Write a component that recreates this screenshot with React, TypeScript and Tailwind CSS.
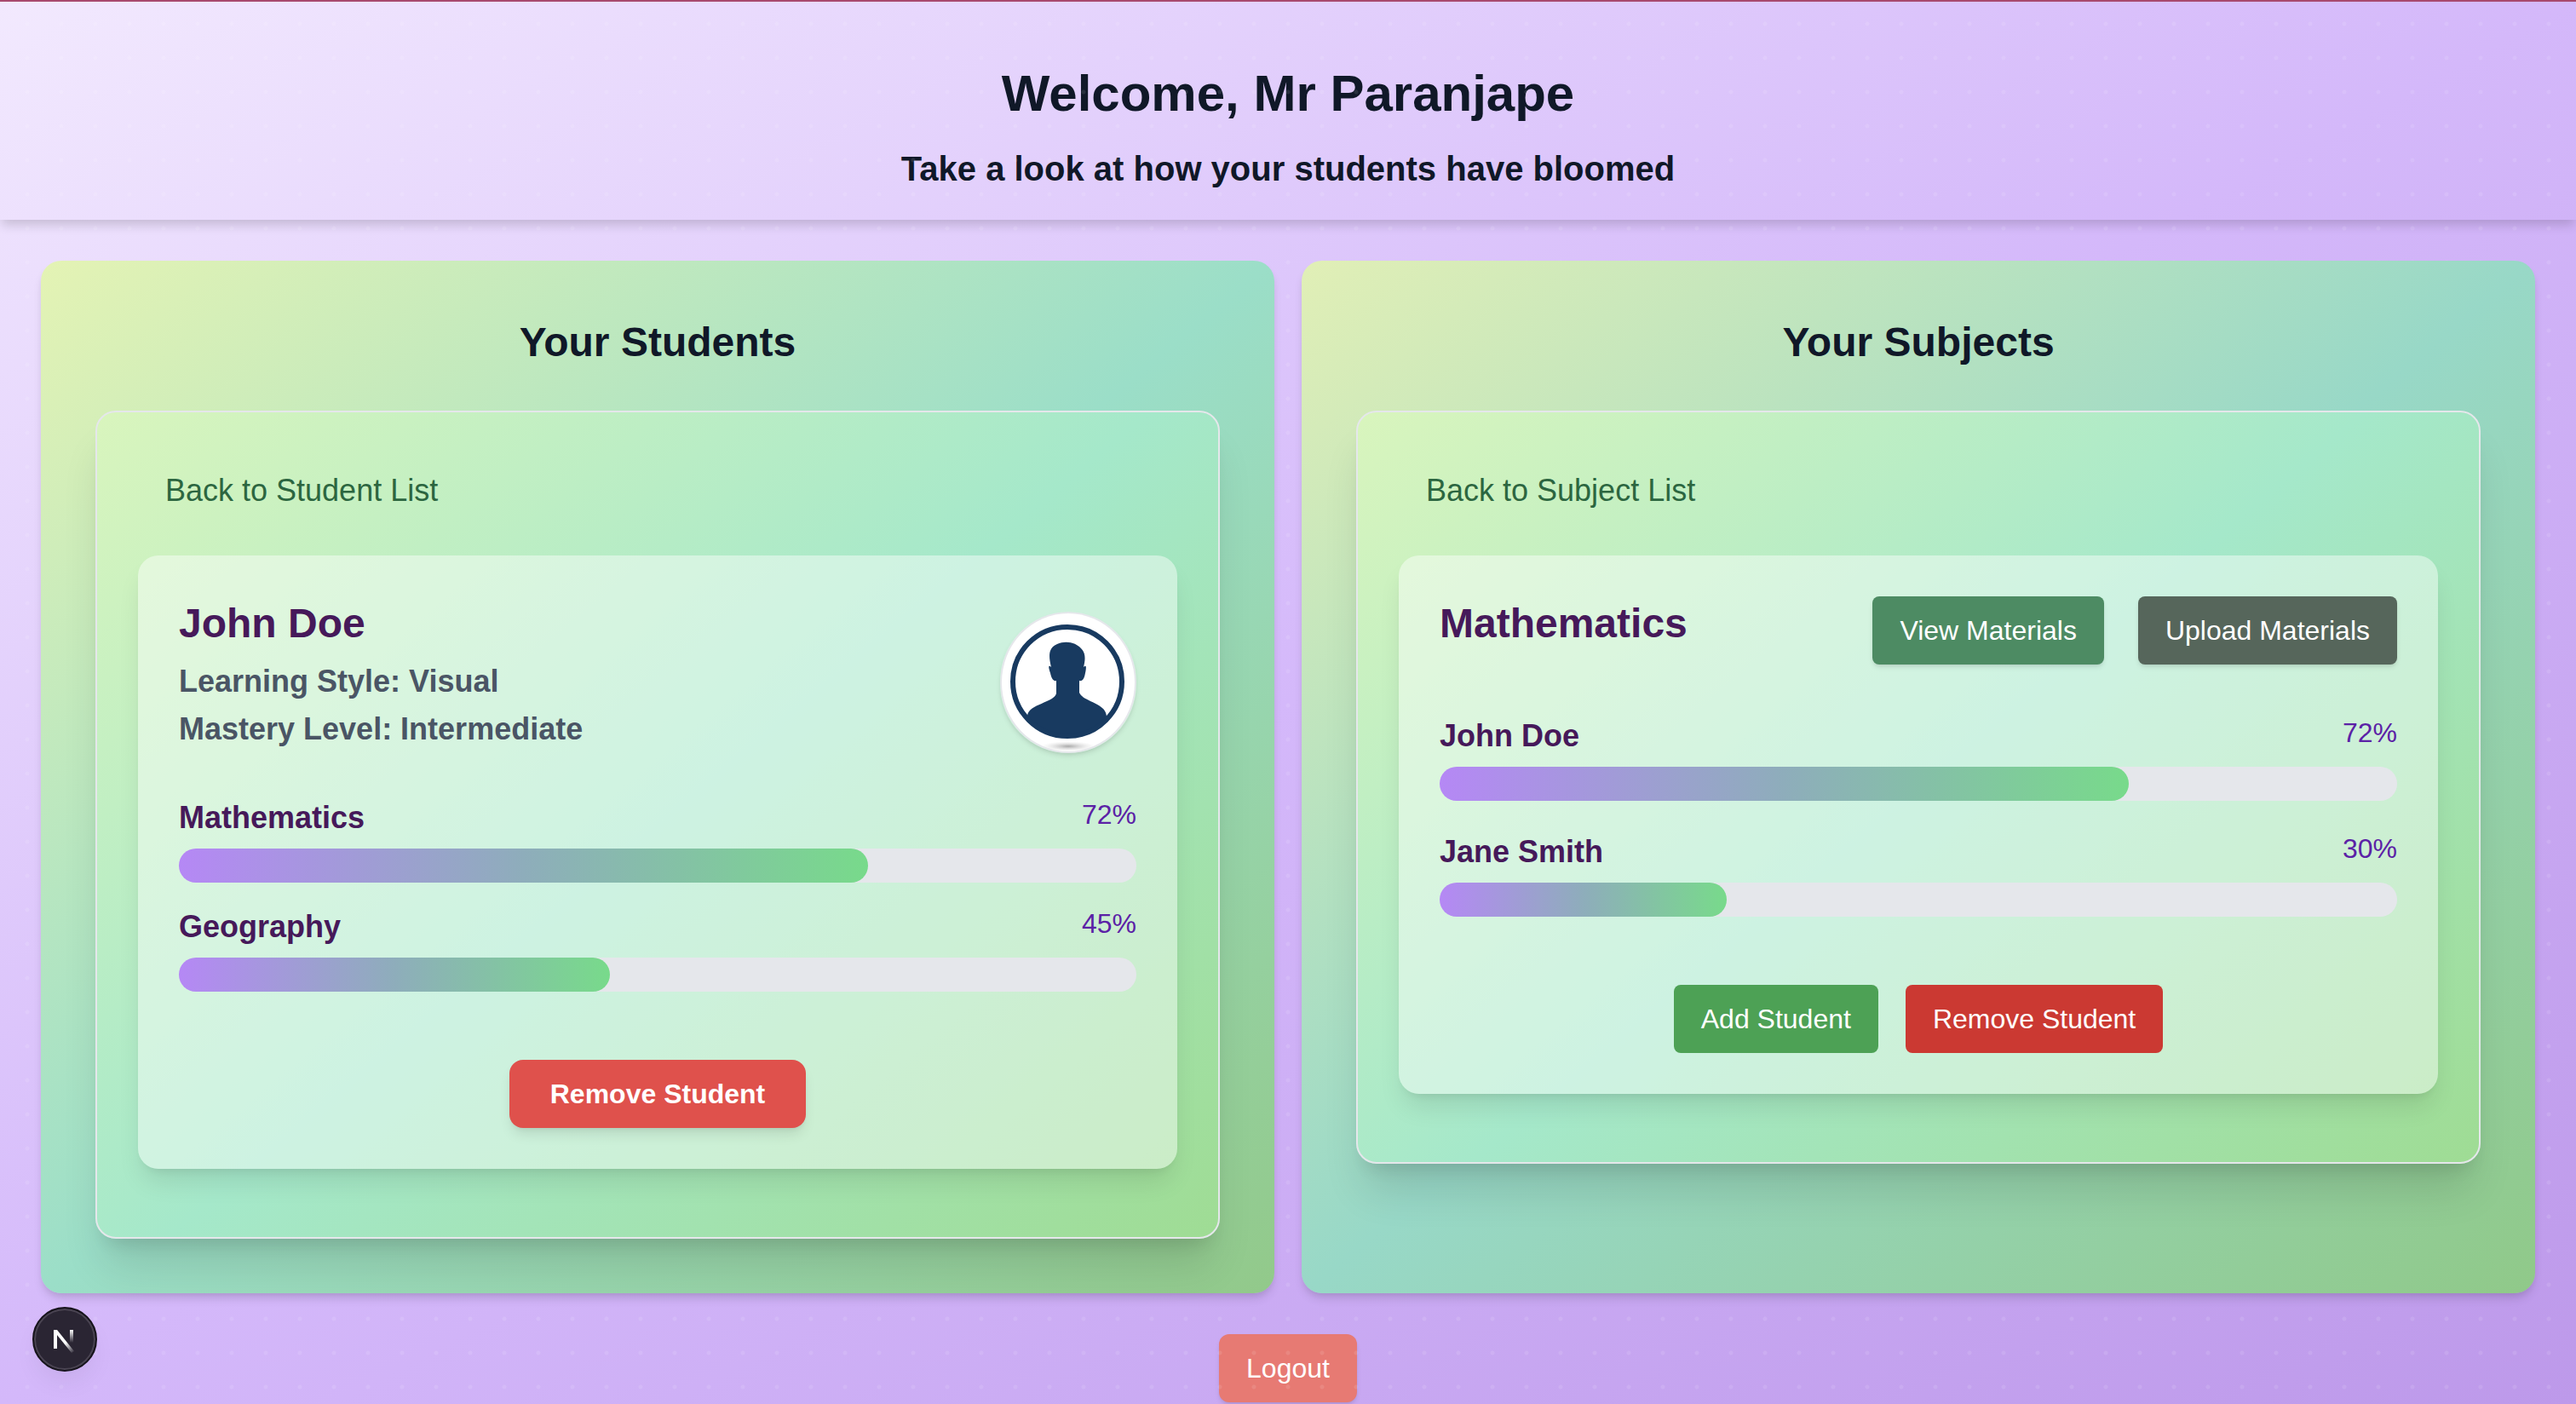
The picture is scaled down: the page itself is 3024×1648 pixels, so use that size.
type ProgressItem = {
  name: string;
  value: number;
};

const subjectProgress: ProgressItem[] = [
  { name: "Mathematics", value: 72 },
  { name: "Geography", value: 45 },
];

const studentProgress: ProgressItem[] = [
  { name: "John Doe", value: 72 },
  { name: "Jane Smith", value: 30 },
];

function ProgressRow({ name, value }: ProgressItem) {
  return (
    <div>
      <div className="mb-4 flex h-14 items-start justify-between">
        <span className="pt-2 text-4xl leading-[56px] font-bold text-[#46195a]">{name}</span>
        <span className="text-[32px] leading-[64px] text-[#5b21a6]">{value}%</span>
      </div>
      <div className="h-10 w-full rounded-full bg-gray-200">
        <div
          className="h-10 rounded-full bg-linear-to-r/srgb from-[#b588f5] via-[#8eadbb] to-[#78da8b]"
          style={{ width: `${value}%` }}
        />
      </div>
    </div>
  );
}

function Avatar() {
  return (
    <svg viewBox="0 0 160 166" className="h-[166px] w-40 rounded-full shadow-md" role="img" aria-label="John Doe">
      <defs>
        <clipPath id="avatar-ring">
          <circle cx="79" cy="82" r="66" />
        </clipPath>
        <radialGradient id="avatar-shadow">
          <stop offset="0" stopColor="#a8a8a8" />
          <stop offset="1" stopColor="#e5e5e5" stopOpacity="0" />
        </radialGradient>
      </defs>
      <ellipse cx="80" cy="83" rx="80" ry="83" fill="#e5e7eb" />
      <ellipse cx="80" cy="83" rx="78" ry="81" fill="#fff" />
      <ellipse cx="80" cy="158" rx="32" ry="6" fill="url(#avatar-shadow)" />
      <g clipPath="url(#avatar-ring)" fill="#183a60">
        <path d="M66 101V81C62 82 60 77 59 72C57 67 56 61 60 65C56 49 58 42 67 38C78 33 90 37 95 43C101 49 100 57 98 65C102 61 101 67 100 72C99 78 97 82 93 81V95C98 106 125 107 125 123V150H32V122C34 108 63 107 66 96Z" />
      </g>
      <circle cx="79" cy="82" r="64" fill="none" stroke="#183a60" strokeWidth="6" />
    </svg>
  );
}

function NextBadge() {
  return (
    <button
      type="button"
      aria-label="Open Next.js Dev Tools"
      className="fixed bottom-[38px] left-[38px] flex h-[76px] w-[76px] items-center justify-center rounded-full border-2 border-[#17141c] bg-[#2a2533] shadow-[inset_0_0_0_2px_#4a4452,0_16px_32px_-8px_rgba(0,0,0,0.08)]"
    >
      <svg viewBox="0 0 28 32" className="h-8 w-7" fill="none">
        <defs>
          <linearGradient id="n-diagonal" x1="15" y1="20" x2="25" y2="32" gradientUnits="userSpaceOnUse">
            <stop stopColor="#fff" />
            <stop offset="1" stopColor="#fff" stopOpacity="0" />
          </linearGradient>
          <linearGradient id="n-stem" x1="0" y1="5" x2="0" y2="20" gradientUnits="userSpaceOnUse">
            <stop stopColor="#fff" />
            <stop offset="1" stopColor="#fff" stopOpacity="0" />
          </linearGradient>
        </defs>
        <path d="M1 5H5L25 30L22 32L5 11V27H1Z" fill="url(#n-diagonal)" />
        <path d="M22 5V20" stroke="url(#n-stem)" strokeWidth="4" />
      </svg>
    </button>
  );
}

const panelClass =
  "flex-1 rounded-3xl bg-linear-140/srgb p-16 shadow-[0_8px_12px_-2px_rgba(0,0,0,0.12),0_4px_8px_-4px_rgba(0,0,0,0.1)]";

const frameClass =
  "mt-12 rounded-3xl border-2 border-gray-200 bg-linear-140/srgb from-[#d9f5bd] via-[#a5e8ca] to-[#9fdc94] px-12 pt-16 pb-20 shadow-[0_40px_50px_-10px_rgba(0,0,0,0.12),0_16px_20px_-12px_rgba(0,0,0,0.12)]";

const cardClass =
  "mt-12 rounded-3xl bg-white/45 p-12 shadow-[0_20px_30px_-6px_rgba(0,0,0,0.1),0_8px_12px_-8px_rgba(0,0,0,0.1)]";

const backClass = "block px-8 py-1 text-4xl leading-[48px] text-[#2c6640]";

export default function App() {
  return (
    <div className="relative min-h-screen overflow-hidden bg-linear-to-br/srgb from-[#f2e9fe] via-[#d4b8fa] to-[#bd99ea] font-['Liberation_Sans',Arial,sans-serif]">
      <header className="border-t-2 border-[#a8496e] pt-16 pb-7 text-center text-gray-900 shadow-[0_8px_12px_-2px_rgba(0,0,0,0.16)]">
        <h1 className="text-6xl leading-[88px] font-bold">Welcome, Mr Paranjape</h1>
        <p className="mt-3 text-[40px] leading-[64px] font-bold">Take a look at how your students have bloomed</p>
      </header>

      <div className="pointer-events-none absolute inset-0 bg-[radial-gradient(circle_at_32px_28px,rgba(255,255,255,0.1)_2px,transparent_3px)] bg-size-[40px_40px]" />

      <main className="relative flex gap-8 px-12 pt-12">
        <section className={`${panelClass} from-[#e4f3b4] via-[#9bdec8] to-[#92c98a]`}>
          <h2 className="text-center text-5xl leading-[64px] font-bold text-gray-900">Your Students</h2>
          <div className={frameClass}>
            <button type="button" className={backClass}>
              Back to Student List
            </button>
            <div className={cardClass}>
              <div className="flex items-end justify-between">
                <div>
                  <h3 className="text-5xl leading-[64px] font-bold text-[#46195a]">John Doe</h3>
                  <p className="mt-2 text-4xl leading-[56px] font-bold text-gray-600">Learning Style: Visual</p>
                  <p className="text-4xl leading-[56px] font-bold text-gray-600">Mastery Level: Intermediate</p>
                </div>
                <Avatar />
              </div>
              <div className="mt-10 space-y-4">
                {subjectProgress.map((item) => (
                  <ProgressRow key={item.name} {...item} />
                ))}
              </div>
              <div className="mt-20 flex justify-center">
                <button
                  type="button"
                  className="h-20 rounded-2xl bg-[#df514c] px-12 text-[32px] font-bold text-white shadow-lg"
                >
                  Remove Student
                </button>
              </div>
            </div>
          </div>
        </section>

        <section className={`${panelClass} from-[#e1efb6] via-[#98d8c7] to-[#90c989]`}>
          <h2 className="text-center text-5xl leading-[64px] font-bold text-gray-900">Your Subjects</h2>
          <div className={frameClass}>
            <button type="button" className={backClass}>
              Back to Subject List
            </button>
            <div className={cardClass}>
              <div className="flex items-start justify-between">
                <h3 className="text-5xl leading-[64px] font-bold text-[#46195a]">Mathematics</h3>
                <div className="flex gap-10">
                  <button type="button" className="h-20 rounded-lg bg-[#4d8b63] px-8 text-[32px] text-white shadow-md">
                    View Materials
                  </button>
                  <button type="button" className="h-20 rounded-lg bg-[#56665b] px-8 text-[32px] text-white shadow-md">
                    Upload Materials
                  </button>
                </div>
              </div>
              <div className="mt-12 space-y-6">
                {studentProgress.map((item) => (
                  <ProgressRow key={item.name} {...item} />
                ))}
              </div>
              <div className="mt-20 flex justify-center gap-8">
                <button type="button" className="h-20 rounded-lg bg-[#4da155] px-8 text-[32px] text-white">
                  Add Student
                </button>
                <button type="button" className="h-20 rounded-lg bg-[#cb3932] px-8 text-[32px] text-white">
                  Remove Student
                </button>
              </div>
            </div>
          </div>
        </section>
      </main>

      <div className="mt-12 flex justify-center">
        <button type="button" className="h-20 rounded-xl bg-[#e77a73] px-8 text-[32px] text-white shadow-md">
          Logout
        </button>
      </div>

      <NextBadge />
    </div>
  );
}
